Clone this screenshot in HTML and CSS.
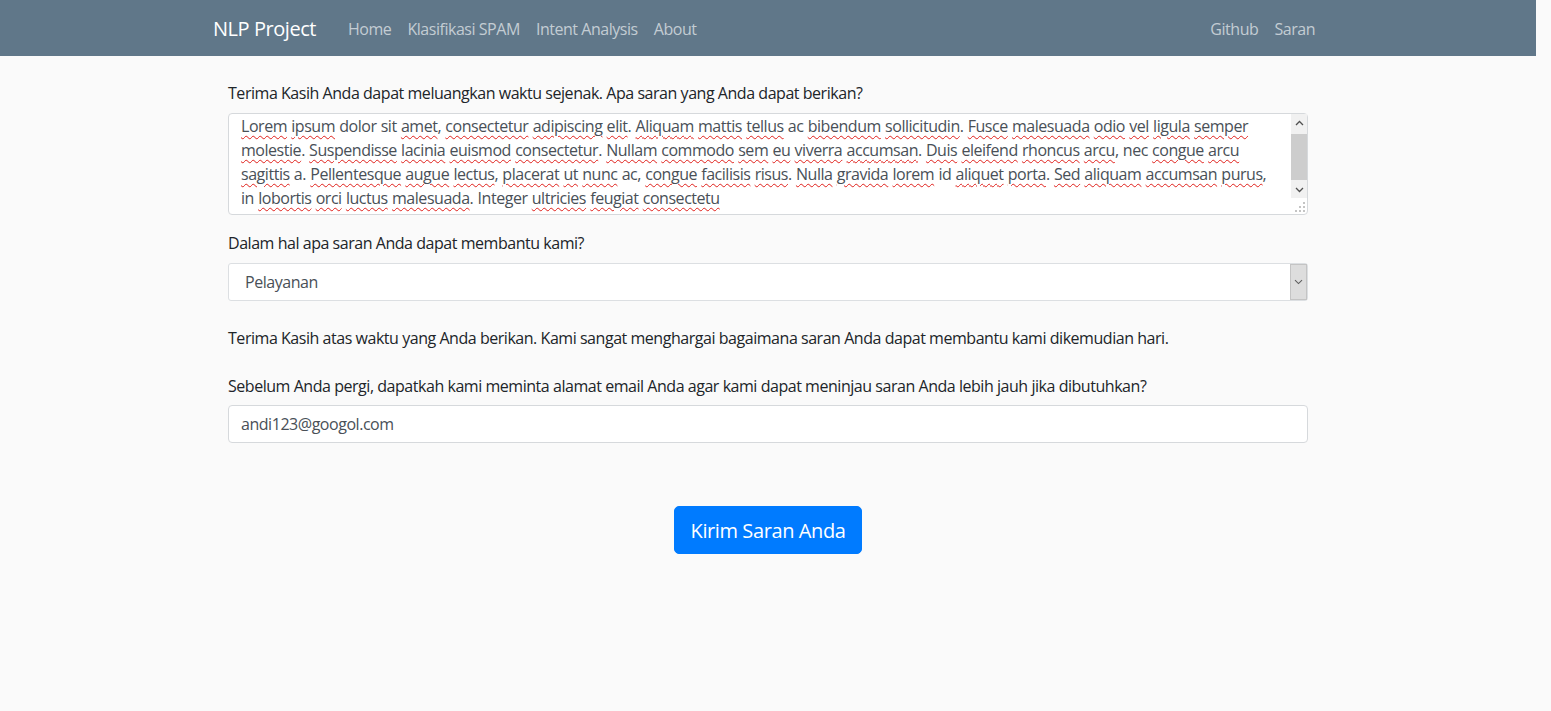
FILE: index.html
```html
<!DOCTYPE html>
<html lang="id">
<head>
<meta charset="utf-8">
<title>NLP Project - Saran</title>
<link rel="stylesheet" href="styles.css">
</head>
<body>
<div class="page">
  <nav class="navbar">
    <div class="nav-inner">
      <a class="brand" href="#">NLP Project</a>
      <ul class="nav-links">
        <li><a href="#">Home</a></li>
        <li><a href="#">Klasifikasi SPAM</a></li>
        <li><a href="#">Intent Analysis</a></li>
        <li><a href="#">About</a></li>
      </ul>
      <ul class="nav-links nav-right">
        <li><a href="#">Github</a></li>
        <li><a href="#">Saran</a></li>
      </ul>
    </div>
  </nav>

  <main class="container">
    <form class="form">
      <div class="group">
        <label class="label">Terima Kasih Anda dapat meluangkan waktu sejenak. Apa saran yang Anda dapat berikan?</label>
        <div class="ta-wrap">
          <div class="textarea" role="textbox" aria-multiline="true"><span class="sp">Lorem</span> <span class="sp">ipsum</span> dolor sit <span class="sp">amet</span>, <span class="sp">consectetur</span> <span class="sp">adipiscing</span> <span class="sp">elit</span>. <span class="sp">Aliquam</span> <span class="sp">mattis</span> <span class="sp">tellus</span> ac <span class="sp">bibendum</span> <span class="sp">sollicitudin</span>. <span class="sp">Fusce</span> <span class="sp">malesuada</span> <span class="sp">odio</span> <span class="sp">vel</span> <span class="sp">ligula</span> <span class="sp">semper</span><br><span class="sp">molestie</span>. <span class="sp">Suspendisse</span> <span class="sp">lacinia</span> <span class="sp">euismod</span> <span class="sp">consectetur</span>. <span class="sp">Nullam</span> <span class="sp">commodo</span> <span class="sp">sem</span> <span class="sp">eu</span> <span class="sp">viverra</span> <span class="sp">accumsan</span>. <span class="sp">Duis</span> <span class="sp">eleifend</span> <span class="sp">rhoncus</span> <span class="sp">arcu</span>, nec <span class="sp">congue</span> <span class="sp">arcu</span><br><span class="sp">sagittis</span> a. <span class="sp">Pellentesque</span> <span class="sp">augue</span> <span class="sp">lectus</span>, <span class="sp">placerat</span> <span class="sp">ut</span> <span class="sp">nunc</span> ac, <span class="sp">congue</span> <span class="sp">facilisis</span> <span class="sp">risus</span>. <span class="sp">Nulla</span> <span class="sp">gravida</span> <span class="sp">lorem</span> id <span class="sp">aliquet</span> <span class="sp">porta</span>. <span class="sp">Sed</span> <span class="sp">aliquam</span> <span class="sp">accumsan</span> <span class="sp">purus</span>,<br>in <span class="sp">lobortis</span> <span class="sp">orci</span> <span class="sp">luctus</span> <span class="sp">malesuada</span>. Integer <span class="sp">ultricies</span> <span class="sp">feugiat</span> <span class="sp">consectetu</span></div>
          <div class="scrollbar" aria-hidden="true">
            <span class="sb-btn">
              <svg width="9" height="6" viewBox="0 0 9 6"><path d="M1 5 L4.5 1.5 L8 5" fill="none" stroke="#505050" stroke-width="1.3"/></svg>
            </span>
            <span class="sb-track"><span class="sb-thumb"></span></span>
            <span class="sb-btn">
              <svg width="9" height="6" viewBox="0 0 9 6"><path d="M1 1 L4.5 4.5 L8 1" fill="none" stroke="#505050" stroke-width="1.3"/></svg>
            </span>
          </div>
          <svg class="grip" width="10" height="10" viewBox="0 0 10 10" aria-hidden="true">
            <rect x="8" y="0" width="2" height="2" fill="#c4c4c4"/>
            <rect x="4" y="4" width="2" height="2" fill="#c4c4c4"/>
            <rect x="8" y="4" width="2" height="2" fill="#c4c4c4"/>
            <rect x="0" y="8" width="2" height="2" fill="#c4c4c4"/>
            <rect x="4" y="8" width="2" height="2" fill="#c4c4c4"/>
            <rect x="8" y="8" width="2" height="2" fill="#c4c4c4"/>
          </svg>
        </div>
      </div>

      <div class="group">
        <label class="label">Dalam hal apa saran Anda dapat membantu kami?</label>
        <div class="select" role="combobox">
          <span class="select-value">Pelayanan</span>
          <span class="select-btn">
            <svg width="9" height="6" viewBox="0 0 9 6"><path d="M1 1.2 L4.5 4.6 L8 1.2" fill="none" stroke="#5f5f5f" stroke-width="1.1"/></svg>
          </span>
        </div>
      </div>

      <p class="text">Terima Kasih atas waktu yang Anda berikan. Kami sangat menghargai bagaimana saran Anda dapat membantu kami dikemudian hari.</p>

      <div class="group">
        <label class="label label-tight">Sebelum Anda pergi, dapatkah kami meminta alamat email Anda agar kami dapat meninjau saran Anda lebih jauh jika dibutuhkan?</label>
        <input class="input" type="email" value="andi123@googol.com">
      </div>

      <div class="actions">
        <button class="btn" type="button">Kirim Saran Anda</button>
      </div>
    </form>
  </main>
</div>
</body>
</html>
```

FILE: styles.css
```css
* { box-sizing: border-box; }

html, body {
  margin: 0;
  padding: 0;
  background: #fafafa;
}

body {
  font-family: "Open Sans", "Noto Sans", sans-serif;
  font-size: 16px;
  line-height: 24px;
  color: #212529;
  letter-spacing: -0.46px;
}

.page {
  width: 1536px;
  min-height: 711px;
}

/* Navbar */
.navbar {
  background: #607789;
  height: 56px;
}

.nav-inner {
  width: 1110px;
  margin: 0 auto;
  height: 56px;
  padding-top: 2px;
  display: flex;
  align-items: center;
}

.brand {
  font-size: 20px;
  color: #ffffff;
  text-decoration: none;
  margin-right: 24px;
  line-height: 30px;
  letter-spacing: -0.45px;
}

.nav-links {
  list-style: none;
  display: flex;
  margin: 0;
  padding: 0;
}

.nav-links a {
  display: block;
  padding: 8px;
  color: #c3ccd3;
  text-decoration: none;
}

.nav-right {
  margin-left: auto;
}

/* Content */
.container {
  width: 1110px;
  margin: 0 auto;
}

.form {
  padding: 25px 15px 0;
}

.group {
  margin-bottom: 16px;
}

.label {
  display: block;
  margin-bottom: 8px;
}

.label-tight {
  margin-bottom: 7px;
}

.ta-wrap {
  position: relative;
}

.textarea {
  height: 102px;
  background: #fff;
  border: 1px solid #d6d9dc;
  border-radius: 4px;
  padding: 0 28px 6px 12px;
  color: #495057;
  white-space: nowrap;
  overflow: hidden;
  word-spacing: 0.5px;
}

.scrollbar {
  position: absolute;
  top: 1px;
  right: 1px;
  width: 16px;
  height: 84px;
  background: #f1f1f1;
  display: flex;
  flex-direction: column;
}

.sb-btn {
  height: 17px;
  display: flex;
  align-items: center;
  justify-content: center;
}

.sb-track {
  flex: 1;
  padding-top: 3px;
}

.sb-thumb {
  display: block;
  height: 46px;
  background: #cdcdcd;
}

.grip {
  position: absolute;
  right: 3px;
  bottom: 3px;
}

.sp {
  text-decoration: underline wavy #e0201b;
  text-decoration-thickness: 1px;
  text-underline-offset: 3px;
}

.select {
  height: 38px;
  background: #fff;
  border: 1px solid #dcdfe2;
  border-radius: 3px;
  display: flex;
  align-items: stretch;
  color: #495057;
}

.select-value {
  flex: 1;
  padding-left: 16px;
  display: flex;
  align-items: center;
}

.select-btn {
  width: 17px;
  background: #dddddd;
  border: 1px solid #c4c4c4;
  display: flex;
  align-items: center;
  justify-content: center;
}

.text {
  margin: 25px 0 24px;
}

.input {
  display: block;
  width: 100%;
  height: 38px;
  background: #fff;
  border: 1px solid #d6d9dc;
  border-radius: 4px;
  padding: 0 12px;
  font: inherit;
  letter-spacing: inherit;
  color: #495057;
  outline: none;
}

.actions {
  display: flex;
  justify-content: center;
  padding-top: 47px;
}

.btn {
  font-family: inherit;
  font-size: 20px;
  line-height: 30px;
  letter-spacing: -0.4px;
  padding: 9px 16px 7px;
  color: #fff;
  background: #007bff;
  border: 1px solid #007bff;
  border-radius: 5px;
  cursor: pointer;
}
```
